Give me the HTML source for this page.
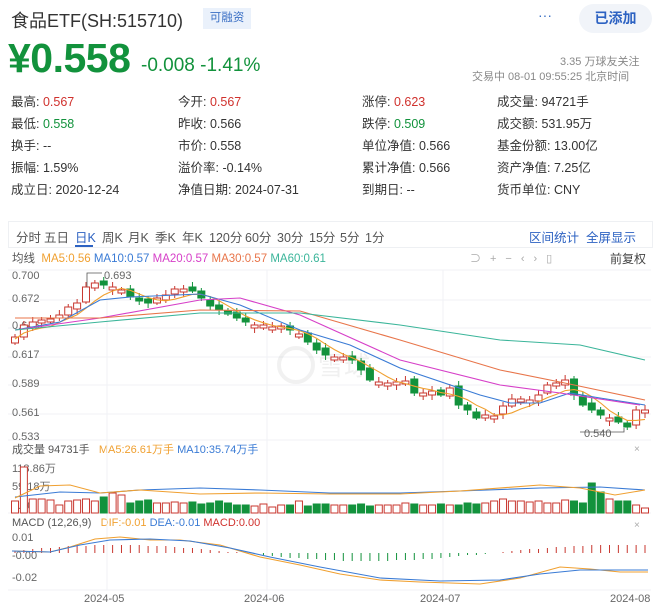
<!DOCTYPE html>
<html><head><meta charset="utf-8"><style>
*{margin:0;padding:0;box-sizing:border-box}
body{width:659px;height:610px;background:#fff;font-family:"Liberation Sans","Noto Sans CJK SC",sans-serif;position:relative;overflow:hidden;color:#333}
.a{position:absolute;white-space:nowrap}
.r{color:#d0312d}.g{color:#12923c}
.info{font-size:12.5px;color:#333}
.tab{font-size:12.5px;color:#555;top:227px}
</style></head><body>
<div class="a" style="left:11px;top:7px;font-size:18px;color:#333">食品ETF(SH:515710)</div>
<div class="a" style="left:203px;top:8px;width:48px;height:21px;background:#eaf1fb;color:#3a6fc4;font-size:11.5px;line-height:21px;text-align:center">可融资</div>
<div class="a" style="left:538px;top:7px;font-size:14px;color:#3a6fc4">···</div>
<div class="a" style="left:579px;top:4px;width:73px;height:29px;border-radius:15px;background:#f1f4f9;color:#2d62c2;font-size:14px;font-weight:bold;line-height:29px;text-align:center">已添加</div>
<div class="a g" style="left:8px;top:35px;font-size:41px;font-weight:bold;letter-spacing:-0.5px">¥0.558</div>
<div class="a g" style="left:141px;top:55px;font-size:19px">-0.008 -1.41%</div>
<div class="a" style="left:560px;top:53px;font-size:11px;color:#888">3.35 万球友关注</div>
<div class="a" style="left:472px;top:68px;font-size:11px;color:#888">交易中 08-01 09:55:25 北京时间</div>

<div class="a info" style="left:11px;top:91px;line-height:22px">最高: <span class="r">0.567</span><br>最低: <span class="g">0.558</span><br>换手: --<br>振幅: 1.59%<br>成立日: 2020-12-24</div>
<div class="a info" style="left:178px;top:91px;line-height:22px">今开: <span class="r">0.567</span><br>昨收: 0.566<br>市价: 0.558<br>溢价率: -0.14%<br>净值日期: 2024-07-31</div>
<div class="a info" style="left:362px;top:91px;line-height:22px">涨停: <span class="r">0.623</span><br>跌停: <span class="g">0.509</span><br>单位净值: 0.566<br>累计净值: 0.566<br>到期日: --</div>
<div class="a info" style="left:497px;top:91px;line-height:22px">成交量: 94721手<br>成交额: 531.95万<br>基金份额: 13.00亿<br>资产净值: 7.25亿<br>货币单位: CNY</div>

<div class="a" style="left:8px;top:221px;width:645px;height:27px;border:1px solid #eef0f3"></div>
<div class="a tab" style="left:16px">分时</div><div class="a tab" style="left:44px">五日</div><div class="a tab" style="left:75px;color:#2d62c2">日K</div><div class="a tab" style="left:102px">周K</div><div class="a tab" style="left:128px">月K</div><div class="a tab" style="left:155px">季K</div><div class="a tab" style="left:182px">年K</div><div class="a tab" style="left:209px">120分</div><div class="a tab" style="left:245px">60分</div><div class="a tab" style="left:277px">30分</div><div class="a tab" style="left:309px">15分</div><div class="a tab" style="left:340px">5分</div><div class="a tab" style="left:365px">1分</div>
<div class="a" style="left:75px;top:245px;width:18px;height:2px;background:#2d62c2"></div>
<div class="a tab" style="left:529px;color:#2d62c2">区间统计&nbsp; 全屏显示</div>
<div class="a" style="left:12px;top:250px;font-size:11.5px;color:#555">均线&nbsp; <span style="color:#f0a030">MA5:0.56</span> <span style="color:#3a7bd5">MA10:0.57</span> <span style="color:#d63fc8">MA20:0.57</span> <span style="color:#e8754a">MA30:0.57</span> <span style="color:#3bb59a">MA60:0.61</span></div>
<div class="a" style="left:470px;top:250px;font-size:11px;color:#aaa;letter-spacing:9px">⊃+−‹›▯</div>
<div class="a" style="left:610px;top:250px;font-size:12px;color:#444">前复权</div>

<div class="a" style="left:12px;top:441px;font-size:11px;color:#555">成交量 94731手&nbsp;&nbsp; <span style="color:#f0a030">MA5:26.61万手</span> <span style="color:#3a7bd5">MA10:35.74万手</span></div>
<div class="a" style="left:12px;top:517px;font-size:11px;color:#555">MACD (12,26,9)&nbsp;&nbsp; <span style="color:#f0a030">DIF:-0.01</span> <span style="color:#3a7bd5">DEA:-0.01</span> <span style="color:#d0312d">MACD:0.00</span></div>
<div class="a" style="left:634px;top:444px;font-size:10px;color:#aaa">×</div>
<div class="a" style="left:634px;top:520px;font-size:10px;color:#aaa">×</div>

<svg class="a" style="left:0;top:0" width="659" height="610" id="s">
<g stroke="#f0f2f5" stroke-width="1">
<line x1="8" y1="270" x2="651" y2="270"/><line x1="8" y1="300" x2="651" y2="300"/><line x1="8" y1="328" x2="651" y2="328"/><line x1="8" y1="357" x2="651" y2="357"/><line x1="8" y1="385" x2="651" y2="385"/><line x1="8" y1="414" x2="651" y2="414"/><line x1="8" y1="440" x2="651" y2="440"/>
<line x1="107" y1="270" x2="107" y2="590"/><line x1="267" y1="270" x2="267" y2="590"/><line x1="443" y1="270" x2="443" y2="590"/><line x1="8" y1="513" x2="651" y2="513"/><line x1="8" y1="590" x2="651" y2="590"/>
</g>
<g fill="#666" font-size="11" font-family="Liberation Sans,sans-serif">
<text x="12" y="279">0.700</text><text x="12" y="302">0.672</text><text x="12" y="329">0.645</text><text x="12" y="358">0.617</text><text x="12" y="387">0.589</text><text x="12" y="416">0.561</text><text x="12" y="440">0.533</text>
<text x="104" y="279">0.693</text><text x="584" y="437">0.540</text>
<text x="12" y="472">118.86万</text><text x="12" y="490">59.18万</text><text x="12" y="509">0.00</text>
<text x="12" y="541">0.01</text><text x="12" y="559">-0.00</text><text x="12" y="581">-0.02</text>
<text x="84" y="602">2024-05</text><text x="244" y="602">2024-06</text><text x="420" y="602">2024-07</text><text x="610" y="602">2024-08</text>
</g>
<g opacity="0.12" stroke="#888" fill="none" stroke-width="4"><circle cx="296" cy="365" r="17"/></g>
<text x="318" y="375" font-size="26" fill="#888" opacity="0.12" font-family="Noto Sans CJK SC,sans-serif">雪球</text>
<polyline points="87,288 87,273 102,273" fill="none" stroke="#555" stroke-width="0.8"/>
<polyline points="624,428 624,432 580,432" fill="none" stroke="#555" stroke-width="0.8"/>
</svg>
<script>
var C=[337,325,322,320,319,315,307,303,287,283,285,287,290,297,301,303,298,295,289,289,291,298,306,310,314,318,322,325,325,327,326,330,334,342,350,355,357,357,360,370,380,382,383,382,381,393,393,391,395,388,405,410,418,415,416,406,399,399,400,395,385,383,380,395,405,410,415,418,422,427,410,410];
var n=C.length,x0=15,dx=(645-15)/(n-1),s='';
var V=[12,46,14,14,13,8,12,13,14,12,16,20,18,10,12,13,10,10,11,10,11,9,10,12,10,8,8,7,9,6,8,8,12,7,9,9,8,8,8,9,7,8,8,8,10,9,8,8,9,8,8,10,9,10,12,14,12,12,11,12,10,10,13,12,10,30,21,14,12,12,8,5];
for(var i=0;i<n;i++){var x=x0+i*dx,c=C[i],o=i?C[i-1]+((i*7)%5-2):c+6;if(Math.abs(o-c)<3)o=c+3;var up=c<o;var col=up?'#c8372f':'#12923c';var t=Math.min(o,c),b=Math.max(o,c);
s+='<line x1="'+x+'" x2="'+x+'" y1="'+(t-3-(i%3))+'" y2="'+(b+2+(i%4))+'" stroke="'+col+'"/>';
s+='<rect x="'+(x-3.5)+'" y="'+t+'" width="7" height="'+(b-t)+'" fill="'+(up?'#fff':col)+'" stroke="'+col+'"/>';
var h=V[i%V.length];s+='<rect x="'+(x-3.5)+'" y="'+(513-h)+'" width="7" height="'+h+'" fill="'+(up?'#fff':col)+'" stroke="'+col+'"/>';
var mv=Math.round(8*Math.sin(i/9+0.3));s+='<line x1="'+x+'" x2="'+x+'" y1="553" y2="'+(553-mv)+'" stroke="'+(mv>0?'#c8372f':'#12923c')+'"/>';}
function ma(k){var p=[];for(var i=0;i<n;i++){var a=0,q=0;for(var j=Math.max(0,i-k+1);j<=i;j++){a+=C[j];q++}p.push((x0+i*dx)+','+(a/q+2))}return p.join(' ')}
function pl(p,c){return '<polyline points="'+p+'" fill="none" stroke="'+c+'" stroke-width="1.1"/>'}
s+=pl(ma(5),'#f0a030');
s+=pl('15,330 60,322 100,300 130,297 200,294 240,305 300,330 350,345 400,368 480,395 510,403 540,403 570,393 600,398 645,405','#3a7bd5');
s+=pl('15,330 100,318 200,300 240,298 300,315 400,360 500,385 560,393 640,405','#d63fc8');
s+=pl('15,318 100,318 200,310 300,311 400,340 500,370 560,382 645,400','#e8754a');
s+=pl('15,330 100,322 200,313 300,313 400,325 500,340 580,345 645,360','#3bb59a');
s+=pl('15,497 60,492 100,493 140,490 200,488 260,490 330,493 400,493 460,491 540,488 600,487 645,490','#3a7bd5');
s+=pl('15,498 40,486 70,485 100,493 140,490 200,494 260,493 330,494 400,494 460,491 540,485 580,488 615,495 645,490','#f0a030');
s+=pl('12,551 50,552 70,547 95,539 120,537 150,540 180,540 220,545 260,557 300,565 340,574 380,580 420,582 480,584 520,578 560,567 590,569 620,572 648,572','#f0a030');
s+=pl('12,551 50,552 80,545 110,540 150,539 190,541 230,548 270,557 320,567 380,578 440,581 500,580 540,574 580,570 620,570 648,570','#3a7bd5');
document.getElementById('s').insertAdjacentHTML('beforeend',s);
</script>
</body></html>
